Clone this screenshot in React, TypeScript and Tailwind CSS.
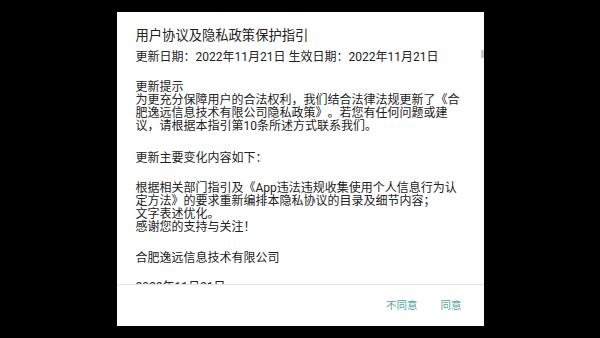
const font = "font-['Roboto','Noto_Sans_CJK_SC',sans-serif]";

function Lines({ lines, className }: { lines: string[]; className?: string }) {
  return (
    <div className={className}>
      {lines.map((line) => (
        <div key={line} className="whitespace-nowrap">
          {line}
        </div>
      ))}
    </div>
  );
}

export default function App() {
  return (
    <div
      className={`flex h-[338px] w-[600px] items-center justify-center bg-black [text-spacing-trim:space-all] ${font}`}
    >
      <div className="relative flex h-[314px] w-[367px] flex-col bg-white text-[#222]">
        <div className="h-[272px] overflow-hidden pl-[19px] pt-[16px]">
          <div className="mb-[5px] text-[13.3px] leading-[16px]">用户协议及隐私政策保护指引</div>
          <div className="text-[12px] leading-[16px]">
            更新日期：2022年11月21日 生效日期：2022年11月21日
          </div>
          <div className="text-[12px] leading-[13px]">
            <Lines
              className="mt-[16px]"
              lines={[
                "更新提示",
                "为更充分保障用户的合法权利，我们结合法律法规更新了《合",
                "肥逸远信息技术有限公司隐私政策》。若您有任何问题或建",
                "议，请根据本指引第10条所述方式联系我们。",
              ]}
            />
            <Lines className="mt-[18.5px]" lines={["更新主要变化内容如下："]} />
            <Lines
              className="mt-[17px]"
              lines={[
                "根据相关部门指引及《App违法违规收集使用个人信息行为认",
                "定方法》的要求重新编排本隐私协议的目录及细节内容；",
                "文字表述优化。",
                "感谢您的支持与关注！",
              ]}
            />
            <Lines className="mt-[18px]" lines={["合肥逸远信息技术有限公司"]} />
            <Lines className="mt-[16.5px]" lines={["2022年11月21日"]} />
          </div>
        </div>
        <div className="h-px bg-[#e3e3e3]" />
        <div className="flex flex-1 items-center justify-end gap-[23px] pr-[22px] text-[10.5px] text-[#4ea59e]">
          <span>不同意</span>
          <span>同意</span>
        </div>
        <div className="absolute right-0 top-[38px] h-[8px] w-[3px] bg-[#c8c8c8]" />
      </div>
    </div>
  );
}
